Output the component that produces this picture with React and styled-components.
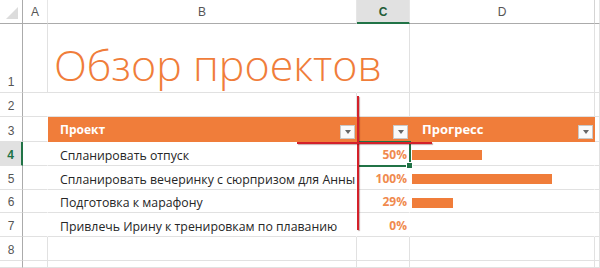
import React from 'react';
import styled, { createGlobalStyle } from 'styled-components';

const GlobalStyle = createGlobalStyle`
  html, body {
    margin: 0;
    padding: 0;
    background: #ffffff;
    overflow: hidden;
  }
  * { box-sizing: border-box; }
`;

const ORANGE = '#f07d3a';
const GRID = '#e1e1e1';
const GREEN = '#217346';

const Sheet = styled.div`
  position: relative;
  width: 600px;
  height: 268px;
  display: grid;
  grid-template-columns: 23px 25px 309px 53px 185px 5px;
  grid-template-rows: 24px 69px 24px 25px 24px 24px 23px 24px 24px 7px;
  font-family: "Open Sans", "Liberation Sans", sans-serif;
  overflow: hidden;
`;

const Corner = styled.div`
  position: relative;
  border-right: 1px solid #ababab;
  border-bottom: 1px solid #ababab;

  &::after {
    content: '';
    position: absolute;
    right: 4px;
    bottom: 4px;
    border-style: solid;
    border-width: 0 0 12px 12px;
    border-color: transparent transparent #dcdcdc transparent;
  }
`;

const ColHead = styled.div`
  display: flex;
  align-items: center;
  justify-content: center;
  font-family: "Liberation Sans", Arial, sans-serif;
  font-size: 12px;
  color: ${({ $active }) => ($active ? '#1e5c38' : '#555')};
  font-weight: ${({ $active }) => ($active ? 700 : 400)};
  background: ${({ $active }) => ($active ? '#e1e1e1' : '#fff')};
  border-right: 1px solid ${({ $last }) => ($last ? '#d4d4d4' : '#e6e6e6')};
  border-bottom: ${({ $active }) => ($active ? `2px solid ${GREEN}` : '1px solid #ababab')};
  padding-top: ${({ $active }) => ($active ? '1px' : '0')};
`;

const RowHead = styled.div`
  display: flex;
  align-items: flex-end;
  justify-content: center;
  padding-bottom: 3px;
  overflow: hidden;
  font-family: "Liberation Sans", Arial, sans-serif;
  font-size: 12px;
  color: ${({ $active }) => ($active ? GREEN : '#555')};
  font-weight: ${({ $active }) => ($active ? 700 : 400)};
  background: ${({ $active }) => ($active ? '#e1e1e1' : '#fff')};
  border-right: ${({ $active }) => ($active ? `2px solid ${GREEN}` : '1px solid #ababab')};
  border-bottom: 1px solid ${GRID};
`;

const Cell = styled.div`
  position: relative;
  display: flex;
  align-items: flex-end;
  justify-content: ${({ $align }) => ($align === 'right' ? 'flex-end' : 'flex-start')};
  padding: 0 ${({ $pr }) => $pr || 0}px ${({ $pb }) => ($pb == null ? 3 : $pb)}px ${({ $pl }) => $pl || 0}px;
  white-space: nowrap;
  border-right: 1px solid ${({ $noRight }) => ($noRight ? 'transparent' : GRID)};
  border-bottom: 1px solid ${GRID};
`;

const TitleCell = styled(Cell)`
  overflow: visible;
  padding-bottom: 6px;
`;

const Title = styled.div`
  position: relative;
  z-index: 1;
  font-family: "Open Sans", "Liberation Sans", sans-serif;
  font-weight: 300;
  font-size: 43px;
  line-height: 1;
  color: ${ORANGE};
  padding-left: 6px;
`;

const HeadCell = styled.div`
  position: relative;
  display: flex;
  align-items: center;
  padding-left: ${({ $pl }) => $pl || 0}px;
  background: ${ORANGE};
  color: #fff;
  font-weight: 700;
  font-size: ${({ $size }) => $size || 12}px;
  border-bottom: 1px solid ${ORANGE};
`;

const DropBtn = styled.span`
  position: absolute;
  right: 2px;
  bottom: 2px;
  width: 15px;
  height: 14px;
  background: #fafafa;
  border: 1px solid #c8c8c8;
  display: flex;
  align-items: center;
  justify-content: center;

  &::after {
    content: '';
    border-style: solid;
    border-width: 4px 3px 0 3px;
    border-color: #666 transparent transparent transparent;
  }
`;

const Task = styled.span`
  font-size: 12.3px;
  color: #262626;
`;

const Pct = styled.span`
  font-size: 12px;
  font-weight: 700;
  color: #f08a4e;
`;

const Bar = styled.div`
  height: 10px;
  margin-left: 2px;
  background: ${ORANGE};
`;

const BarCell = styled(Cell)`
  align-items: center;
  padding: 3px 0 0 0;
`;

const Selection = styled.div`
  position: absolute;
  left: 357px;
  top: 141px;
  width: 54px;
  height: 26px;
  border: 2px solid ${GREEN};
  pointer-events: none;

  &::after {
    content: '';
    position: absolute;
    right: -4px;
    bottom: -4px;
    width: 5px;
    height: 5px;
    background: ${GREEN};
    border: 1px solid #fff;
  }
`;

const RedLine = styled.div`
  position: absolute;
  background: #d4202a;
  box-shadow: 1px 1px 1px rgba(90, 20, 20, 0.35);
  left: ${({ $x }) => $x}px;
  top: ${({ $y }) => $y}px;
  width: ${({ $w }) => $w}px;
  height: ${({ $h }) => $h}px;
`;

const tasks = [
  { name: 'Спланировать отпуск', pct: 50 },
  { name: 'Спланировать вечеринку с сюрпризом для Анны', pct: 100 },
  { name: 'Подготовка к марафону', pct: 29 },
  { name: 'Привлечь Ирину к тренировкам по плаванию', pct: 0 },
];

const BAR_FULL = 140;

export default function App() {
  return (
    <>
      <GlobalStyle />
      <Sheet>
        <Corner />
        <ColHead>A</ColHead>
        <ColHead>B</ColHead>
        <ColHead $active>C</ColHead>
        <ColHead $last>D</ColHead>
        <ColHead />

        <RowHead>1</RowHead>
        <Cell />
        <TitleCell $noRight>
          <Title>Обзор проектов</Title>
        </TitleCell>
        <Cell />
        <Cell />
        <Cell />

        <RowHead>2</RowHead>
        <Cell $noRight />
        <Cell />
        <Cell />
        <Cell />
        <Cell />

        <RowHead>3</RowHead>
        <Cell $noRight />
        <HeadCell $pl={12}>
          Проект
          <DropBtn />
        </HeadCell>
        <HeadCell>
          <DropBtn />
        </HeadCell>
        <HeadCell $pl={12} $size={13}>
          Прогресс
          <DropBtn />
        </HeadCell>
        <Cell />

        {tasks.map((t, i) => (
          <React.Fragment key={t.name}>
            <RowHead $active={i === 0}>{i + 4}</RowHead>
            <Cell $noRight />
            <Cell $noRight $pl={12} $pb={1}>
              <Task>{t.name}</Task>
            </Cell>
            <Cell $noRight $align="right" $pr={2} $pb={2}>
              <Pct>{t.pct}%</Pct>
            </Cell>
            <BarCell $noRight>
              {t.pct > 0 && <Bar style={{ width: (BAR_FULL * t.pct) / 100 }} />}
            </BarCell>
            <Cell />
          </React.Fragment>
        ))}

        <RowHead>8</RowHead>
        <Cell />
        <Cell />
        <Cell />
        <Cell />
        <Cell />

        <RowHead />
        <Cell />
        <Cell />
        <Cell />
        <Cell />
        <Cell />

        <Selection />
        <RedLine $x={357} $y={96} $w={2} $h={134} />
        <RedLine $x={297} $y={142} $w={135} $h={2} />
      </Sheet>
    </>
  );
}
